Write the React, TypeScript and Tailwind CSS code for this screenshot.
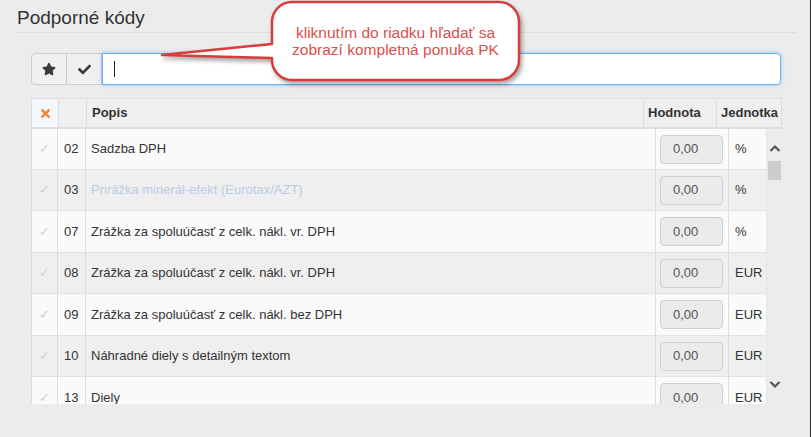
import { FaStar, FaCheck, FaTimes } from "react-icons/fa"

const rows = [
  { code: "02", label: "Sadzba DPH", unit: "%", muted: false, h: "h-[41px]" },
  { code: "03", label: "Prirážka minerál-efekt (Eurotax/AZT)", unit: "%", muted: true, h: "h-[41px]" },
  { code: "07", label: "Zrážka za spoluúčasť z celk. nákl. vr. DPH", unit: "%", muted: false, h: "h-[42px]" },
  { code: "08", label: "Zrážka za spoluúčasť z celk. nákl. vr. DPH", unit: "EUR", muted: false, h: "h-[41px]" },
  { code: "09", label: "Zrážka za spoluúčasť z celk. nákl. bez DPH", unit: "EUR", muted: false, h: "h-[42px]" },
  { code: "10", label: "Náhradné diely s detailným textom", unit: "EUR", muted: false, h: "h-[41px]" },
  { code: "13", label: "Diely", unit: "EUR", muted: false, h: "h-[42px]" },
]

function Callout() {
  return (
    <div className="absolute left-[150px] top-0 w-[375px] h-[90px]">
      <svg width="375" height="90" className="absolute inset-0 drop-shadow-[2px_3px_2px_rgba(0,0,0,0.35)]">
        <path
          d="M142 2 H349 A20 20 0 0 1 369 22 V60 A20 20 0 0 1 349 80 H142 A20 20 0 0 1 122 60 V58 L12 55 L122 44 V22 A20 20 0 0 1 142 2 Z"
          fill="#ffffff"
          stroke="#d93c3c"
          strokeWidth="2.5"
          strokeLinejoin="round"
        />
      </svg>
      <div className="absolute left-[122px] top-[24px] w-[247px] text-center text-[15.5px] leading-[17px] text-[#d9504b]">
        kliknutím do riadku hľadať sa
        <br />
        zobrazí kompletná ponuka PK
      </div>
    </div>
  )
}

export default function App() {
  return (
    <div className="relative w-[811px] h-[437px] overflow-hidden bg-[#ececec] border-r border-[#2b2b2b] font-['Liberation_Sans',Arial,sans-serif] text-[#333]">
      {/* title */}
      <div className="ml-[17px] mr-[13px] h-[33px] pt-[7px] border-b border-[#dcdcdc] text-[19px] leading-[22px] text-[#333]">
        Podporné kódy
      </div>

      {/* search bar */}
      <div className="ml-[31px] mr-[29px] mt-[20px] h-[32px] flex">
        <div className="w-[36px] flex items-center justify-center bg-[#f0f0f0] border border-[#cccccc] rounded-l-[4px] text-[#3a3a3a]">
          <FaStar size={14} />
        </div>
        <div className="w-[35px] flex items-center justify-center bg-[#f0f0f0] border border-l-0 border-[#cccccc] text-[#3a3a3a]">
          <FaCheck size={13} />
        </div>
        <div className="flex-1 flex items-center pl-[11px] bg-white border border-[#66afe9] rounded-r-[4px] shadow-[0_0_4px_rgba(102,175,233,0.6)]">
          <div className="w-px h-[16px] bg-[#222]" />
        </div>
      </div>

      {/* table */}
      <div className="ml-[31px] mt-[13px] w-[751px]">
        <div className="flex h-[31px] text-[13px] font-bold text-[#333] bg-[#efefef] border border-[#dddddd] border-b-2">
          <div className="w-[27px] flex items-center justify-center bg-[#f4f7fb] border-r border-[#dddddd] text-[#f0862a]">
            <FaTimes size={13} />
          </div>
          <div className="w-[28px] border-r border-[#dddddd]" />
          <div className="w-[557px] flex items-center pl-[5px] border-r border-[#dddddd]">Popis</div>
          <div className="w-[73px] flex items-center pl-[4px] border-r border-[#dddddd]">Hodnota</div>
          <div className="flex-1 flex items-center pl-[4px]">Jednotka</div>
        </div>

        <div className="flex h-[275px] overflow-hidden">
          <div className="w-[736px]">
            {rows.map((r, i) => (
              <div
                key={r.code}
                className={`flex ${r.h} text-[13px] border-b border-[#e2e2e2] ${i % 2 === 0 ? "bg-[#fafafa]" : "bg-[#efefef]"}`}
              >
                <div className="w-[27px] flex items-center justify-center border-l border-r border-[#dddddd] text-[#cfcfcf] text-[13px]">
                  ✓
                </div>
                <div className="w-[28px] flex items-center pl-[6px] border-r border-[#dddddd]">{r.code}</div>
                <div className={`w-[570px] flex items-center pl-[5px] border-r border-[#dddddd] ${r.muted ? "text-[#b9cde4]" : ""}`}>
                  {r.label}
                </div>
                <div className="w-[73px] flex items-center pl-[4px] border-r border-[#dddddd]">
                  <div className="w-[63px] h-[29px] flex items-center pl-[12px] bg-[#ebebeb] border border-[#cfcfcf] rounded-[4px] text-[#555]">
                    0,00
                  </div>
                </div>
                <div className="flex-1 flex items-center pl-[6px] border-r border-[#e4e4e4]">{r.unit}</div>
              </div>
            ))}
          </div>
          {/* scrollbar */}
          <div className="w-[15px] relative">
            <svg width="14" height="10" className="absolute left-[1px] top-[15px]" viewBox="0 0 14 10">
              <path d="M2.5 7 L7 2.5 L11.5 7" fill="none" stroke="#555" strokeWidth="2.2" />
            </svg>
            <div className="absolute left-[1px] top-[32px] w-[13px] h-[19px] bg-[#cdcdcd]" />
            <svg width="14" height="10" className="absolute left-[1px] top-[250px]" viewBox="0 0 14 10">
              <path d="M2.5 3 L7 7.5 L11.5 3" fill="none" stroke="#555" strokeWidth="2.2" />
            </svg>
          </div>
        </div>
      </div>

      <Callout />
    </div>
  )
}
